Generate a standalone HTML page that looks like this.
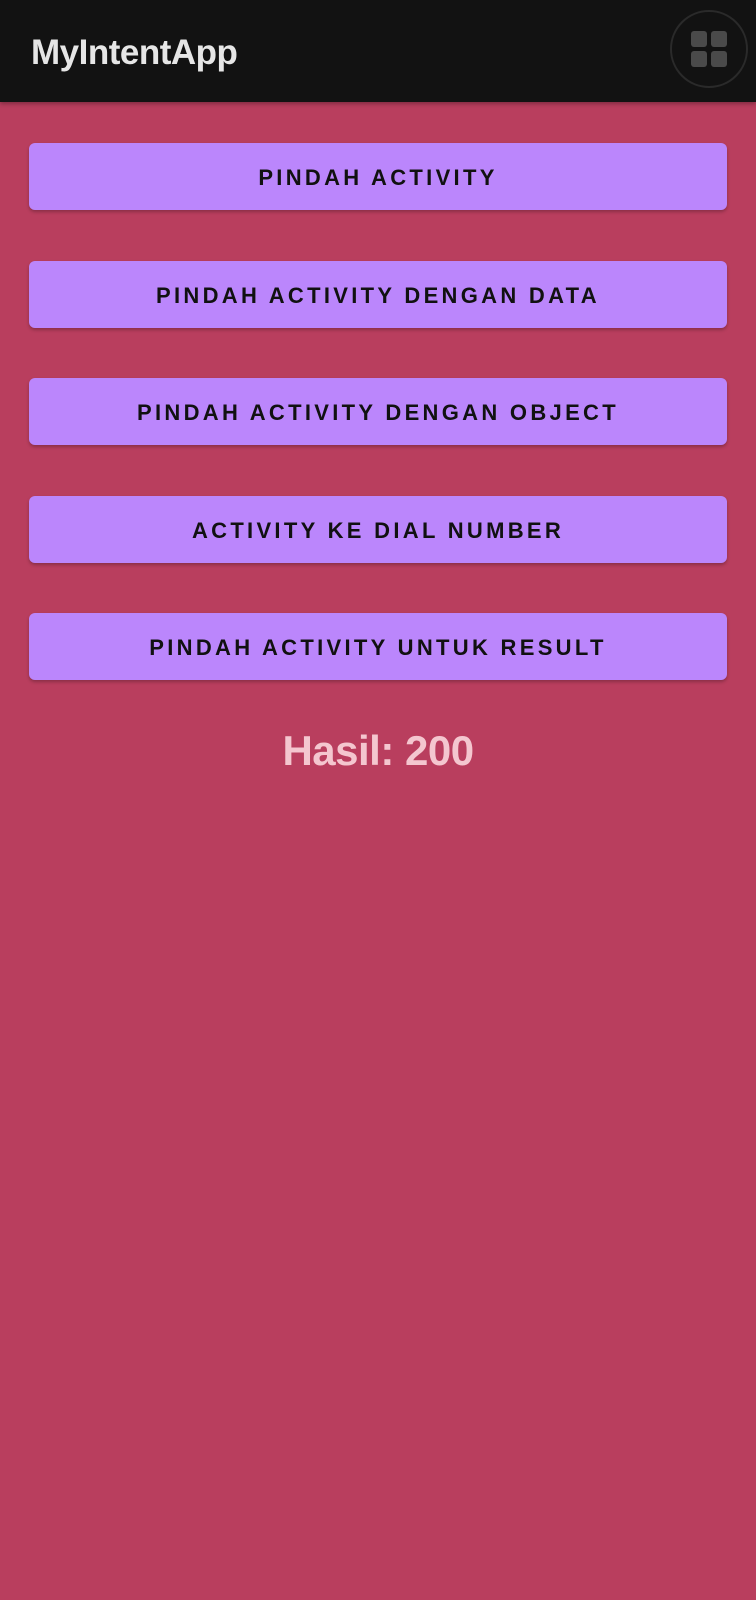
<!DOCTYPE html>
<html><head><style>
body{margin:0;width:756px;height:1600px;background:#b93e5e;font-family:"Liberation Sans",sans-serif;overflow:hidden;position:relative}
.bar{position:absolute;left:0;top:0;width:756px;height:102px;background:#121212;box-shadow:0 2px 4px rgba(0,0,0,.3)}
.title{position:absolute;left:31px;top:33px;font-size:35px;color:#e6e6e6;font-weight:bold;letter-spacing:-0.5px}
.circ{position:absolute;left:670px;top:10px;width:78px;height:78px;border-radius:50%;border:2px solid #2a2a2a;box-sizing:border-box}
.sq{position:absolute;width:16px;height:16px;background:#4a4a4a;border-radius:3px}
.btn{position:absolute;left:29px;width:698px;height:67px;background:#bb86fc;border-radius:6px;box-shadow:0 2px 3px rgba(0,0,0,.25);text-align:center;line-height:69px;font-size:22px;font-weight:bold;letter-spacing:3.3px;color:#111}
.res{position:absolute;left:0;width:756px;top:727px;text-align:center;font-size:42px;color:#f4c6cf;font-weight:bold;letter-spacing:-0.5px}
</style></head><body>
<div class="bar"><div class="title">MyIntentApp</div>
<div class="circ"><div class="sq" style="left:19px;top:19px"></div><div class="sq" style="left:39px;top:19px"></div><div class="sq" style="left:19px;top:39px"></div><div class="sq" style="left:39px;top:39px"></div></div></div>
<div class="btn" style="top:143px">PINDAH ACTIVITY</div>
<div class="btn" style="top:261px">PINDAH ACTIVITY DENGAN DATA</div>
<div class="btn" style="top:378px">PINDAH ACTIVITY DENGAN OBJECT</div>
<div class="btn" style="top:496px">ACTIVITY KE DIAL NUMBER</div>
<div class="btn" style="top:613px">PINDAH ACTIVITY UNTUK RESULT</div>
<div class="res">Hasil: 200</div>
</body></html>
